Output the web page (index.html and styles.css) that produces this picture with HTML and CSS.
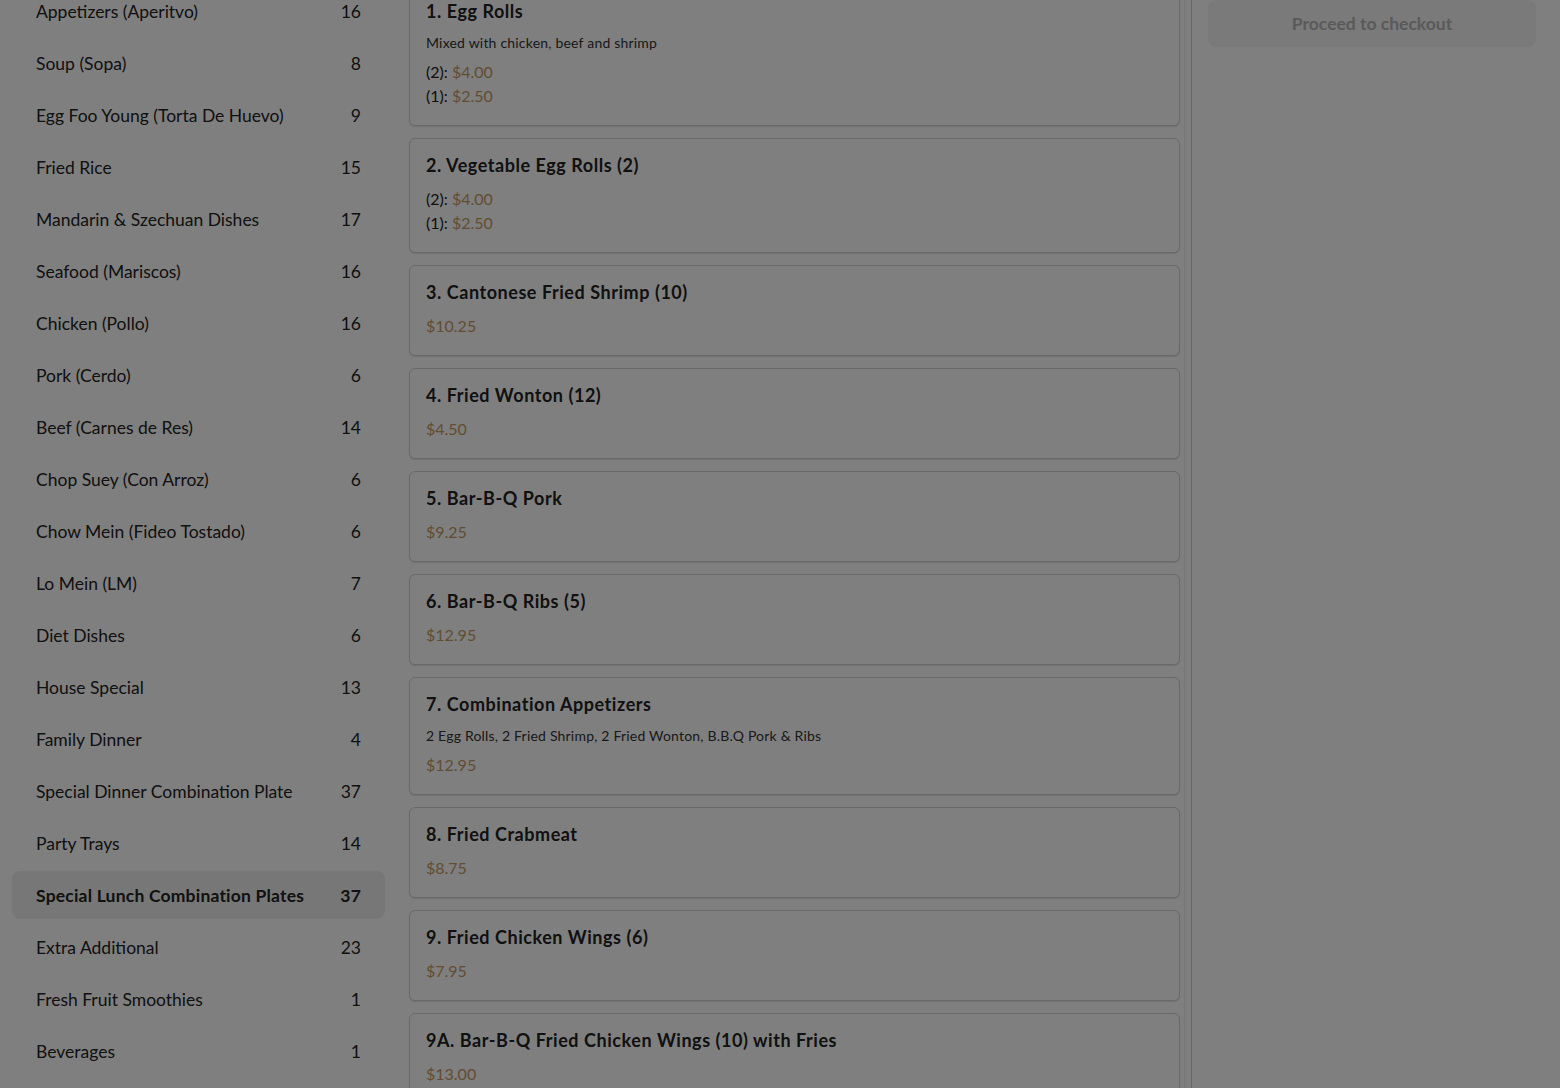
FILE: index.html
```html
<!DOCTYPE html>
<html lang="en">
<head>
<meta charset="utf-8">
<title>Menu</title>
<link rel="stylesheet" href="styles.css">
</head>
<body>
<div class="page">
  <nav class="sidebar">
    <div class="cat"><span>Appetizers (Aperitvo)</span><span>16</span></div>
    <div class="cat"><span>Soup (Sopa)</span><span>8</span></div>
    <div class="cat"><span>Egg Foo Young (Torta De Huevo)</span><span>9</span></div>
    <div class="cat"><span>Fried Rice</span><span>15</span></div>
    <div class="cat"><span>Mandarin &amp; Szechuan Dishes</span><span>17</span></div>
    <div class="cat"><span>Seafood (Mariscos)</span><span>16</span></div>
    <div class="cat"><span>Chicken (Pollo)</span><span>16</span></div>
    <div class="cat"><span>Pork (Cerdo)</span><span>6</span></div>
    <div class="cat"><span>Beef (Carnes de Res)</span><span>14</span></div>
    <div class="cat"><span>Chop Suey (Con Arroz)</span><span>6</span></div>
    <div class="cat"><span>Chow Mein (Fideo Tostado)</span><span>6</span></div>
    <div class="cat"><span>Lo Mein (LM)</span><span>7</span></div>
    <div class="cat"><span>Diet Dishes</span><span>6</span></div>
    <div class="cat"><span>House Special</span><span>13</span></div>
    <div class="cat"><span>Family Dinner</span><span>4</span></div>
    <div class="cat"><span>Special Dinner Combination Plate</span><span>37</span></div>
    <div class="cat"><span>Party Trays</span><span>14</span></div>
    <div class="cat active"><span>Special Lunch Combination Plates</span><span>37</span></div>
    <div class="cat"><span>Extra Additional</span><span>23</span></div>
    <div class="cat"><span>Fresh Fruit Smoothies</span><span>1</span></div>
    <div class="cat"><span>Beverages</span><span>1</span></div>
  </nav>

  <main class="menu">
    <div class="item">
      <h3 class="title">1. Egg Rolls</h3>
      <p class="desc">Mixed with chicken, beef and shrimp</p>
      <div class="price"><span class="size">(2): </span>$4.00</div>
      <div class="price"><span class="size">(1): </span>$2.50</div>
    </div>
    <div class="item">
      <h3 class="title">2. Vegetable Egg Rolls (2)</h3>
      <div class="price"><span class="size">(2): </span>$4.00</div>
      <div class="price"><span class="size">(1): </span>$2.50</div>
    </div>
    <div class="item">
      <h3 class="title">3. Cantonese Fried Shrimp (10)</h3>
      <div class="price">$10.25</div>
    </div>
    <div class="item">
      <h3 class="title">4. Fried Wonton (12)</h3>
      <div class="price">$4.50</div>
    </div>
    <div class="item">
      <h3 class="title">5. Bar-B-Q Pork</h3>
      <div class="price">$9.25</div>
    </div>
    <div class="item">
      <h3 class="title">6. Bar-B-Q Ribs (5)</h3>
      <div class="price">$12.95</div>
    </div>
    <div class="item">
      <h3 class="title">7. Combination Appetizers</h3>
      <p class="desc">2 Egg Rolls, 2 Fried Shrimp, 2 Fried Wonton, B.B.Q Pork &amp; Ribs</p>
      <div class="price">$12.95</div>
    </div>
    <div class="item">
      <h3 class="title">8. Fried Crabmeat</h3>
      <div class="price">$8.75</div>
    </div>
    <div class="item">
      <h3 class="title">9. Fried Chicken Wings (6)</h3>
      <div class="price">$7.95</div>
    </div>
    <div class="item">
      <h3 class="title">9A. Bar-B-Q Fried Chicken Wings (10) with Fries</h3>
      <div class="price">$13.00</div>
    </div>
  </main>

  <aside class="cart">
    <button class="checkout" type="button">Proceed to checkout</button>
  </aside>
</div>
<div class="backdrop"></div>
</body>
</html>
```

FILE: styles.css
```css
html, body {
  margin: 0;
  padding: 0;
  height: 100%;
  overflow: hidden;
  background: #ffffff;
}

body {
  font-family: "Lato", "Noto Sans", sans-serif;
  color: #222222;
}

.page {
  display: flex;
  align-items: flex-start;
  height: 1088px;
}

.sidebar {
  width: 373px;
  margin: -13px 0 0 12px;
  display: flex;
  flex-direction: column;
  gap: 4px;
  flex-shrink: 0;
}

.cat {
  height: 48px;
  display: flex;
  align-items: center;
  justify-content: space-between;
  padding: 0 24px;
  border-radius: 8px;
  font-size: 17.5px;
  color: #222222;
}

.cat.active {
  background: #eeeeee;
  font-weight: 700;
  letter-spacing: 0.2px;
}

.menu {
  width: 771px;
  margin: -16px 0 0 24px;
  padding-right: 4px;
  display: flex;
  flex-direction: column;
  gap: 12px;
  flex-shrink: 0;
  border-right: 1px solid #ececec;
}

.item {
  border: 1px solid #d2d2d2;
  border-radius: 6px;
  padding: 16px 16px 17px;
  box-shadow: 0 1px 1px rgba(0, 0, 0, 0.12);
  background: #ffffff;
}

.title {
  margin: 0 0 12px;
  font-size: 18px;
  line-height: 20px;
  font-weight: 700;
  letter-spacing: 0.55px;
  color: #222222;
}

.desc {
  margin: 0 0 7px;
  font-size: 14px;
  line-height: 20px;
  letter-spacing: 0.2px;
  color: #333333;
}

.price {
  font-size: 16px;
  line-height: 24px;
  color: #c49a64;
}

.size {
  color: #222222;
}

.cart {
  flex: 1;
  align-self: stretch;
  border-left: 1px solid #cfcfcf;
  margin-left: 6px;
  padding: 0 24px 0 16px;
}

.checkout {
  display: block;
  width: 100%;
  height: 47px;
  border: none;
  border-radius: 8px;
  background: #f4f4f4;
  color: #b4b4b4;
  font-family: "Lato", "Noto Sans", sans-serif;
  font-size: 17.5px;
  font-weight: 700;
}

.backdrop {
  position: fixed;
  inset: 0;
  background: rgba(0, 0, 0, 0.5);
}
```
